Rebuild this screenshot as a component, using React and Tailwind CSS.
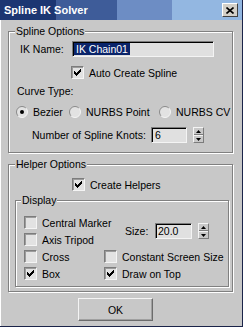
import React from "react";

function Check({ checked }) {
  return (
    <span className="flex h-[13px] w-[13px] shrink-0 items-center justify-center border border-t-[#7c7c7c] border-l-[#7c7c7c] border-b-[#f4f4f4] border-r-[#f4f4f4] bg-[#e2e2e2] shadow-[inset_1px_1px_0_#9c9c9c]">
      {checked && (
        <svg width="7" height="7" viewBox="0 0 7 7" shapeRendering="crispEdges">
          <path d="M6 0h1v1h-1zM5 1h2v1h-2zM0 2h1v1h-1zM4 2h3v1h-3zM0 3h2v1h-2zM3 3h3v1h-3zM0 4h5v1h-5zM1 5h3v1h-3zM2 6h1v1h-1z" fill="#000" />
        </svg>
      )}
    </span>
  );
}

function Radio({ checked }) {
  return (
    <svg width="12" height="12" viewBox="0 0 12 12" className="shrink-0">
      <circle cx="6" cy="6" r="5.5" fill="#e2e2e2" />
      <path d="M2.1 9.9 A5.5 5.5 0 0 1 9.9 2.1" stroke="#8a8a8a" strokeWidth="1" fill="none" />
      <path d="M9.9 2.1 A5.5 5.5 0 0 1 2.1 9.9" stroke="#f4f4f4" strokeWidth="1" fill="none" />
      {checked && <circle cx="6" cy="6" r="2" fill="#000" />}
    </svg>
  );
}

function Spinner() {
  return (
    <span className="flex h-[16px] w-[11px] shrink-0 flex-col border border-t-[#f4f4f4] border-l-[#f4f4f4] border-b-[#7c7c7c] border-r-[#7c7c7c]">
      <span className="flex flex-1 items-center justify-center border-b border-[#7c7c7c]">
        <svg width="5" height="3" viewBox="0 0 5 3">
          <path d="M2.5 0L5 3H0Z" fill="#000" />
        </svg>
      </span>
      <span className="flex flex-1 items-center justify-center border-t border-[#f4f4f4]">
        <svg width="5" height="3" viewBox="0 0 5 3">
          <path d="M0 0H5L2.5 3Z" fill="#000" />
        </svg>
      </span>
    </span>
  );
}

function Edit({ width, children }) {
  return (
    <span
      className={`flex h-[16px] shrink-0 items-center border border-t-[#7c7c7c] border-l-[#7c7c7c] border-b-[#f4f4f4] border-r-[#f4f4f4] bg-[#e0e0e0] shadow-[inset_1px_1px_0_#000] ${width}`}
    >
      {children}
    </span>
  );
}

export default function App() {
  return (
    <div className="flex h-[327px] w-[243px] flex-col whitespace-nowrap border-r border-b border-[#1b2449] bg-[#c8c8c8] font-['Liberation_Sans',Arial,sans-serif] text-[10.5px] leading-[12px] text-black">
      {/* title bar */}
      <div className="flex h-[20px] shrink-0 items-center justify-between bg-[linear-gradient(90deg,#1c3672_0_56px,#3e5c99_56px_117px,#6d8dc4_117px_172px,#93b7e1_172px)] pl-[4px] pr-[4px]">
        <span className="text-[11px] font-bold text-white">Spline IK Solver</span>
        <span className="flex h-[14px] w-[16px] items-center justify-center border border-t-white border-l-white border-b-[#404040] border-r-[#404040] bg-[#d4d0c8]">
          <svg width="8" height="7" viewBox="0 0 8 7">
            <path d="M0.5 0.5L7.5 6.5M7.5 0.5L0.5 6.5" stroke="#000" strokeWidth="1.6" />
          </svg>
        </span>
      </div>

      <div className="flex flex-1 flex-col pl-[8px] pt-[5px] shadow-[inset_1px_0_0_#fff]">
        {/* Spline Options */}
        <fieldset className="w-[225px] min-w-0 border border-[#808080] pb-[9px] shadow-[1px_1px_0_#fff,inset_1px_1px_0_#fff]">
          <legend className="ml-[6px] bg-[#c8c8c8] px-px leading-[12px]">Spline Options</legend>

          <div className="mt-[4px] flex h-[16px] items-center">
            <span className="ml-[11px] w-[52px]">IK Name:</span>
            <Edit width="w-[142px]">
              <span className="ml-px bg-[#0a246a] px-[2px] text-white">IK Chain01</span>
            </Edit>
          </div>

          <div className="ml-[62px] mt-[9px] flex h-[13px] items-center gap-[5px]">
            <Check checked />
            <span>Auto Create Spline</span>
          </div>

          <div className="ml-[8px] mt-[6px] h-[12px]">Curve Type:</div>

          <div className="ml-[7px] mt-[9px] flex h-[12px] items-center">
            <span className="flex w-[53px] items-center gap-[5px]">
              <Radio checked />
              <span>Bezier</span>
            </span>
            <span className="flex w-[90px] items-center gap-[5px]">
              <Radio />
              <span>NURBS Point</span>
            </span>
            <span className="flex items-center gap-[5px]">
              <Radio />
              <span>NURBS CV</span>
            </span>
          </div>

          <div className="mt-[9px] flex h-[16px] items-center">
            <span className="ml-[23px] w-[119px]">Number of Spline Knots:</span>
            <Edit width="w-[36px]">
              <span className="pl-[3px]">6</span>
            </Edit>
            <span className="ml-[6px]">
              <Spinner />
            </span>
          </div>
        </fieldset>

        {/* Helper Options */}
        <fieldset className="mt-[5px] w-[225px] min-w-0 border border-[#808080] pb-[4px] shadow-[1px_1px_0_#fff,inset_1px_1px_0_#fff]">
          <legend className="ml-[6px] bg-[#c8c8c8] px-px leading-[12px]">Helper Options</legend>

          <div className="ml-[63px] mt-[8px] flex h-[13px] items-center gap-[5px]">
            <Check checked />
            <span>Create Helpers</span>
          </div>

          <fieldset className="ml-[6px] mt-[3px] w-[214px] min-w-0 border border-[#808080] pb-[6px] shadow-[1px_1px_0_#fff,inset_1px_1px_0_#fff]">
            <legend className="ml-[5px] bg-[#c8c8c8] px-px leading-[12px]">Display</legend>

            <div className="ml-[8px] mt-[10px] grid grid-cols-[80px_1fr] grid-rows-[13px_13px_13px_13px] gap-y-[4px]">
              <div className="col-start-1 row-start-1 flex items-center gap-[5px]">
                <Check />
                <span>Central Marker</span>
              </div>
              <div className="col-start-1 row-start-2 flex items-center gap-[5px]">
                <Check />
                <span>Axis Tripod</span>
              </div>
              <div className="col-start-1 row-start-3 flex items-center gap-[5px]">
                <Check />
                <span>Cross</span>
              </div>
              <div className="col-start-1 row-start-4 flex items-center gap-[5px]">
                <Check checked />
                <span>Box</span>
              </div>

              <div className="col-start-2 row-span-2 row-start-1 flex items-center pl-[21px]">
                <span className="w-[30px]">Size:</span>
                <Edit width="w-[37px]">
                  <span className="pl-[2px]">20.0</span>
                </Edit>
                <span className="ml-[6px]">
                  <Spinner />
                </span>
              </div>
              <div className="col-start-2 row-start-3 flex items-center gap-[5px]">
                <Check />
                <span>Constant Screen Size</span>
              </div>
              <div className="col-start-2 row-start-4 flex items-center gap-[5px]">
                <Check checked />
                <span>Draw on Top</span>
              </div>
            </div>
          </fieldset>
        </fieldset>

        <button className="ml-[70px] mt-[6px] flex h-[23px] w-[75px] items-center justify-center border border-t-[#f4f4f4] border-l-[#f4f4f4] border-b-[#6c6c6c] border-r-[#6c6c6c] bg-[#c8c8c8] shadow-[inset_-1px_-1px_0_#a0a0a0]">
          OK
        </button>
      </div>
    </div>
  );
}
